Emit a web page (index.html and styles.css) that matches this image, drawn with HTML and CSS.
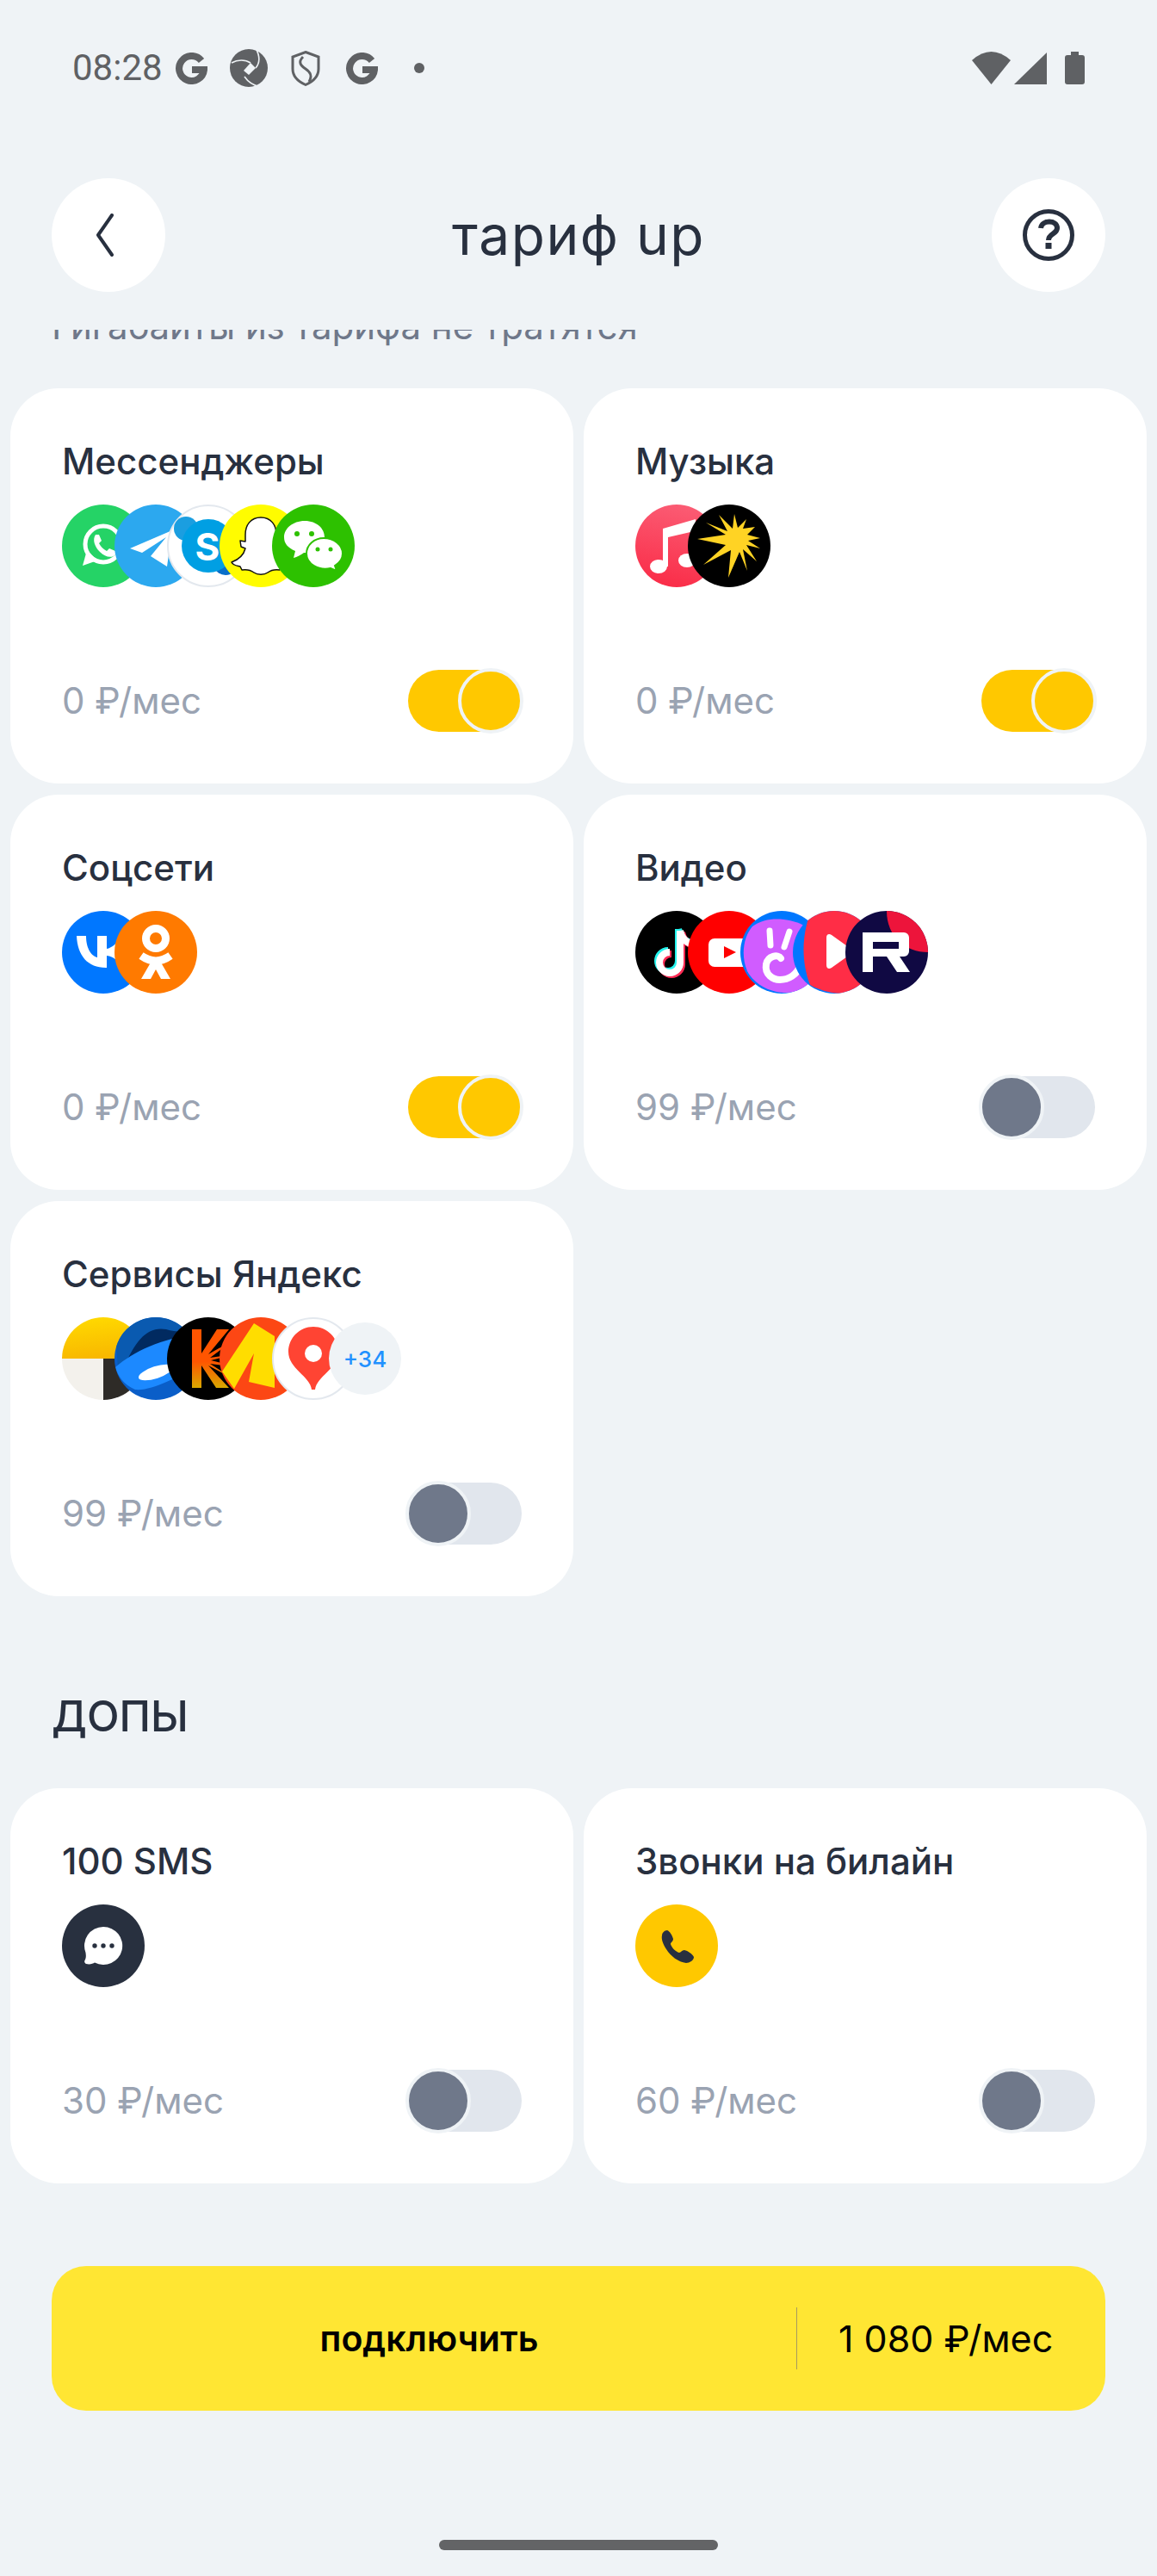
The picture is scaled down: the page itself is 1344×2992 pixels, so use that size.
FILE: index.html
```html
<!DOCTYPE html>
<html lang="ru">
<head>
<meta charset="utf-8">
<title>тариф up</title>
<link rel="stylesheet" href="styles.css">
</head>
<body>
<div class="page">
  <div class="status">
    <span class="time">08:28</span>
    <svg class="st st-g first" viewBox="0 0 37 37"><path class="g-stroke" d="M30 9.5A14.5 14.5 0 1 0 33 20H19"/></svg>
    <svg class="st st-shutter" viewBox="0 0 44 46"><circle cx="22" cy="23" r="22" fill="#5f6164"/><g fill="none" stroke="#eff3f6" stroke-width="1.6"><path d="M2 17C9 13 18 13 24 17"/><path d="M30 0C35 9 35 17 30 23"/><path d="M17 33C21 39 27 43 35 45"/></g><path d="M24 17L30 23L22 31L16 26Z" fill="#eff3f6"/></svg>
    <svg class="st st-shield" viewBox="0 0 34 41"><path d="M17 1.5L32 7V21C32 30 25 36 17 39.5C9 36 2 30 2 21V7Z" fill="none" stroke="#5f6164" stroke-width="3"/><path d="M14 7C8 13 11 17 17 21C23 25 25 29 21 36" fill="none" stroke="#5f6164" stroke-width="3"/></svg>
    <svg class="st st-g second" viewBox="0 0 37 37"><path class="g-stroke" d="M30 9.5A14.5 14.5 0 1 0 33 20H19"/></svg>
    <span class="dot"></span>
    <svg class="st st-sys" viewBox="0 0 131 38"><path d="M0 10Q22.500 -10 45 10L22.500 38Z" fill="#5f6164"/><path d="M49 38H87V1Z" fill="#5f6164"/><path d="M115 0H124V4H128A3 3 0 0 1 131 7V35A3 3 0 0 1 128 38H111A3 3 0 0 1 108 35V7A3 3 0 0 1 111 4H115Z" fill="#5f6164"/></svg>
  </div>

  <header class="header">
    <button class="round" aria-label="назад"><svg class="chev" viewBox="0 0 24 50"><path d="M20 2L4 25L20 48" fill="none" stroke="#28303f" stroke-width="4" stroke-linecap="round" stroke-linejoin="round"/></svg></button>
    <h1 class="title">тариф up</h1>
    <button class="round" aria-label="помощь"><svg class="help" viewBox="0 0 60 60"><circle cx="30" cy="30" r="27.500" fill="none" stroke="#28303f" stroke-width="5"/><path d="M21 22C22 12 40 12 40 22C40 29 30 28 30 36" fill="none" stroke="#28303f" stroke-width="6"/><rect x="26.500" y="39" width="7" height="7" fill="#28303f"/></svg></button>
  </header>

  <main class="scroll">
    <p class="note">Гигабайты из тарифа не тратятся</p>

    <section class="grid">
      <article class="card">
        <h2 class="card-title">Мессенджеры</h2>
        <div class="icons">
          <svg class="ic" viewBox="0 0 96 96"><circle cx="48" cy="48" r="48" fill="#25d366"/><circle cx="48" cy="46" r="21" fill="none" stroke="#fff" stroke-width="5"/><path d="M24 71L29 53L41 65Z" fill="#fff"/><path d="M39 35L43 35L46 42L43 45C45 49 48 52 52 54L55 51L62 54V58C58 63 50 61 44 55C38 49 35 41 39 35Z" fill="#fff"/></svg>
          <svg class="ic" viewBox="0 0 96 96"><circle cx="48" cy="48" r="48" fill="#2ca8ef"/><path d="M18 51L67 30L61 72L42 60L60 38L32 56Z" fill="#fff"/></svg>
          <svg class="ic" viewBox="0 0 96 96"><circle cx="48" cy="48" r="47" fill="#fff" stroke="#e3e8ee" stroke-width="2"/><circle cx="22" cy="28" r="14" fill="#1b9ee0"/><circle cx="68" cy="68" r="14" fill="#0a6fc9"/><circle cx="48" cy="48" r="31" fill="#009fe3"/><text class="skype" x="47" y="65">S</text></svg>
          <svg class="ic" viewBox="0 0 96 96"><circle cx="48" cy="48" r="48" fill="#fffc00"/><path d="M48 15C60 15 66 24 66 35V43L72 42L70 49L66 51C68 59 74 64 82 67C80 71 76 71 72 72L70 76C64 75 60 76 56 79C52 82 44 82 40 79C36 76 32 75 26 76L24 72C20 71 16 71 14 67C22 64 28 59 30 51L25 49L24 42L30 43V35C30 24 36 15 48 15Z" fill="#fff" stroke="#111" stroke-width="1.500" stroke-linejoin="round"/></svg>
          <svg class="ic" viewBox="0 0 96 96"><circle cx="48" cy="48" r="48" fill="#2dc100"/><path d="M38 19C52 19 61 28 61 38C61 49 50 57 37 56C34 58 29 61 25 62L27 54C18 50 14 45 14 38C14 28 24 19 38 19Z" fill="#fff"/><circle cx="29" cy="34" r="3" fill="#2dc100"/><circle cx="46" cy="34" r="3" fill="#2dc100"/><path d="M60 39C72 39 82 47 82 57C82 63 78 68 73 71L75 77L68 74C54 77 40 69 40 57C40 47 49 39 60 39Z" fill="#fff" stroke="#2dc100" stroke-width="2"/><circle cx="53" cy="52" r="2.500" fill="#2dc100"/><circle cx="68" cy="52" r="2.500" fill="#2dc100"/></svg>
        </div>
        <div class="foot"><span class="price">0 ₽/мес</span><span class="toggle on"><span class="knob"></span></span></div>
      </article>

      <article class="card">
        <h2 class="card-title">Музыка</h2>
        <div class="icons">
          <svg class="ic" viewBox="0 0 96 96"><defs><linearGradient id="am" x1="0.600" y1="0" x2="0.400" y2="1"><stop offset="0" stop-color="#fb5c74"/><stop offset="1" stop-color="#fa2d48"/></linearGradient></defs><circle cx="48" cy="48" r="48" fill="url(#am)"/><path d="M32 28L70 17V60H64V32L38 38V72H32Z" fill="#fff"/><ellipse cx="27" cy="72" rx="10" ry="8" fill="#fff"/><ellipse cx="60" cy="65" rx="10" ry="8" fill="#fff"/></svg>
          <svg class="ic" viewBox="0 0 96 96"><circle cx="48" cy="48" r="48" fill="#000"/><polygon fill="#ffd324" points="11,40 44,35 21,21 46,31 36,12 52,28 54,11 58,27 68,17 64,28 78,26 69,35 84,39 70,42 84,51 68,47 80,66 64,52 69,77 60,55 47,85 50,53 18,70 44,47"/></svg>
        </div>
        <div class="foot"><span class="price">0 ₽/мес</span><span class="toggle on"><span class="knob"></span></span></div>
      </article>

      <article class="card">
        <h2 class="card-title">Соцсети</h2>
        <div class="icons">
          <svg class="ic" viewBox="0 0 96 96"><circle cx="48" cy="48" r="48" fill="#07f"/><path d="M51 66C30 66 18 52 17 29H28C28 46 36 53 41 54V29H52V44C58 43 65 37 68 29H78C76 40 68 47 62 50C68 53 77 59 80 66H69C66 58 60 53 52 52V66Z" fill="#fff"/></svg>
          <svg class="ic" viewBox="0 0 96 96"><circle cx="48" cy="48" r="48" fill="#ff7a00"/><circle cx="48" cy="32" r="11.500" fill="none" stroke="#fff" stroke-width="9"/><path d="M31 52Q48 64 65 52" fill="none" stroke="#fff" stroke-width="9"/><path d="M42 60L31 79H42L48 68L54 79H65L54 60Z" fill="#fff"/></svg>
        </div>
        <div class="foot"><span class="price">0 ₽/мес</span><span class="toggle on"><span class="knob"></span></span></div>
      </article>

      <article class="card">
        <h2 class="card-title">Видео</h2>
        <div class="icons">
          <svg class="ic" viewBox="0 0 96 96"><circle cx="48" cy="48" r="48" fill="#000"/><g fill="none" stroke-width="8"><path stroke="#25f4ee" d="M50 21V58A12 12 0 1 1 38 46"/><path stroke="#25f4ee" d="M50 21C52 31 58 36 67 37"/><path stroke="#fe2c55" d="M54 25V62A12 12 0 1 1 42 50"/><path stroke="#fe2c55" d="M54 25C56 35 62 40 71 41"/><path stroke="#fff" d="M52 23V60A12 12 0 1 1 40 48"/><path stroke="#fff" d="M52 23C54 33 60 38 69 39"/></g></svg>
          <svg class="ic" viewBox="0 0 96 96"><circle cx="48" cy="48" r="48" fill="#f00"/><rect x="24" y="32" width="50" height="33" rx="7" fill="#fff"/><path d="M42 41L56 48L42 55Z" fill="#f00"/></svg>
          <svg class="ic" viewBox="0 0 96 96"><defs><clipPath id="ivi"><circle cx="48" cy="48" r="48"/></clipPath></defs><circle cx="48" cy="48" r="48" fill="#07f"/><path clip-path="url(#ivi)" d="M14 18C30 6 55 8 72 16C96 40 92 80 70 92C50 100 20 92 8 70C0 50 4 30 14 18Z" fill="#d05cff"/><path d="M34 23L35 40M57 24L51 42" stroke="#fff" stroke-width="7" stroke-linecap="round"/><path d="M47 55C44 50 32 52 30 62C28 74 38 80 46 80C56 80 66 74 69 64" fill="none" stroke="#fff" stroke-width="8" stroke-linecap="round"/></svg>
          <svg class="ic" viewBox="0 0 96 96"><defs><clipPath id="red"><circle cx="48" cy="48" r="48"/></clipPath></defs><circle cx="48" cy="48" r="48" fill="#07f"/><path clip-path="url(#red)" d="M20 3C45 -6 75 -2 100 10V90C75 98 45 100 20 86C10 60 10 30 20 3Z" fill="#ff2d46"/><path d="M39 31C39 27 42 26 45 28L66 43C69 45 69 49 66 51L45 66C42 68 39 67 39 63Z" fill="#fff"/></svg>
          <svg class="ic" viewBox="0 0 96 96"><circle cx="48" cy="48" r="48" fill="#100943"/><path d="M48 0A48 48 0 0 1 96 48C70 48 48 30 48 0Z" fill="#ed143b"/><path fill-rule="evenodd" d="M20 25H68A6 6 0 0 1 74 31V47A6 6 0 0 1 68 53H63L75 71H60L48 53H32V71H20ZM32 36V44H62V36Z" fill="#fff"/></svg>
        </div>
        <div class="foot"><span class="price">99 ₽/мес</span><span class="toggle"><span class="knob"></span></span></div>
      </article>

      <article class="card">
        <h2 class="card-title">Сервисы Яндекс</h2>
        <div class="icons">
          <svg class="ic" viewBox="0 0 96 96"><defs><linearGradient id="yp" x1="0.500" y1="0" x2="0.700" y2="1"><stop offset="0" stop-color="#ffd800"/><stop offset="1" stop-color="#f8b500"/></linearGradient></defs><path d="M0 48A48 48 0 0 1 96 48Z" fill="url(#yp)"/><path d="M0 48H48V96A48 48 0 0 1 0 48Z" fill="#f3f1ec"/><path d="M48 48H96A48 48 0 0 1 48 96Z" fill="#2e2b27"/></svg>
          <svg class="ic" viewBox="0 0 96 96"><defs><clipPath id="blue"><circle cx="48" cy="48" r="48"/></clipPath></defs><circle cx="48" cy="48" r="48" fill="#0a5ec8"/><g clip-path="url(#blue)"><path d="M0 0H96V16L4 60Z" fill="#0a5ab0"/><path d="M12 56C24 28 38 10 60 14C72 18 84 16 96 18V30Z" fill="#012a60"/><path d="M1 58C22 40 55 24 96 20V62C70 68 45 86 24 84C10 78 4 68 1 58Z" fill="#1c89ff"/><ellipse cx="48" cy="64" rx="21" ry="7" transform="rotate(-18 48 64)" fill="#fff"/></g></svg>
          <svg class="ic" viewBox="0 0 96 96"><defs><linearGradient id="kp" x1="0" y1="0" x2="0" y2="1"><stop offset="0.550" stop-color="#ff5500"/><stop offset="1" stop-color="#d8a800"/></linearGradient></defs><circle cx="48" cy="48" r="48" fill="#000"/><path fill="url(#kp)" d="M29 14H40V42L58 14H72L48 43L78 26L50 47L84 42L51 50L84 58L50 54L78 72L48 56L72 82H57L40 56V82H29Z"/></svg>
          <svg class="ic" viewBox="0 0 96 96"><circle cx="48" cy="48" r="48" fill="#fc4714"/><path d="M3 63L40 7L64 22L64 82L34 75L40 42L17 83Z" fill="#ffdd00"/></svg>
          <svg class="ic" viewBox="0 0 96 96"><circle cx="48" cy="48" r="47" fill="#fff" stroke="#e3e8ee" stroke-width="2"/><path d="M48 11C32 11 19 24 19 40C19 60 44 68 46 84H50C52 68 77 60 77 40C77 24 64 11 48 11Z" fill="#ff4433"/><circle cx="48" cy="42" r="10" fill="#fff"/></svg>
          <span class="more">+34</span>
        </div>
        <div class="foot"><span class="price">99 ₽/мес</span><span class="toggle"><span class="knob"></span></span></div>
      </article>
    </section>

    <h3 class="section">ДОПЫ</h3>

    <section class="grid">
      <article class="card">
        <h2 class="card-title">100 SMS</h2>
        <div class="icons">
          <svg class="ic" viewBox="0 0 96 96"><circle cx="48" cy="48" r="48" fill="#28303f"/><path d="M48 26A22 22 0 1 1 38 67.500C36 69 32 70 28 69C26 68 25.500 66 27 64C28 62 28 60 27.500 56A22 22 0 0 1 48 26Z" fill="#fff"/><circle cx="38" cy="48" r="2.700" fill="#28303f"/><circle cx="48" cy="48" r="2.700" fill="#28303f"/><circle cx="58" cy="48" r="2.700" fill="#28303f"/></svg>
        </div>
        <div class="foot"><span class="price">30 ₽/мес</span><span class="toggle"><span class="knob"></span></span></div>
      </article>
      <article class="card">
        <h2 class="card-title">Звонки на билайн</h2>
        <div class="icons">
          <svg class="ic" viewBox="0 0 96 96"><circle cx="48" cy="48" r="48" fill="#ffc800"/><path d="M37 30C40 31 43 36 44 40C44 43 41 44 41 46C42 50 47 55 51 56C53 56 54 53 57 53C61 54 66 57 68 61C68 65 63 68 59 68C50 67 41 60 36 52C32 46 30 40 31 36C31 33 34 30 37 30Z" fill="#28303f"/></svg>
        </div>
        <div class="foot"><span class="price">60 ₽/мес</span><span class="toggle"><span class="knob"></span></span></div>
      </article>
    </section>

    <button class="cta"><span class="cta-label">подключить</span><span class="cta-price">1 080 ₽/мес</span></button>
    <div class="home"></div>
  </main>
</div>
</body>
</html>
```

FILE: styles.css
```css
* { box-sizing: border-box; }
html, body { margin: 0; padding: 0; }
body { background: #eff3f6; font-family: "Inter", "Noto Sans", sans-serif; color: #28303f; }
.page { width: 1344px; height: 2992px; overflow: hidden; background: #eff3f6; }

.status { height: 158px; padding: 0 84px; display: flex; align-items: center; }
.time { font-family: "Roboto", sans-serif; font-size: 42px; color: #5f6164; line-height: 1; width: 104px; }
.st { display: block; flex: none; }
.st-g { width: 37px; height: 37px; }
.st-g.first { margin-left: 16px; }
.st-g.second { margin-left: 30px; }
.g-stroke { fill: none; stroke: #5f6164; stroke-width: 8; }
.st-shutter { width: 44px; height: 46px; margin-left: 26px; }
.st-shield { width: 34px; height: 41px; margin-left: 27px; }
.dot { width: 12px; height: 12px; border-radius: 50%; background: #5f6164; margin-left: 42px; }
.st-sys { width: 131px; height: 38px; margin-left: auto; }

.header { margin-top: 49px; padding: 0 60px; height: 132px; display: flex; align-items: center; justify-content: space-between; }
.round { width: 132px; height: 132px; border: 0; padding: 0; border-radius: 50%; background: #fff; display: flex; align-items: center; justify-content: center; }
.chev { width: 24px; height: 50px; margin-right: 8px; }
.help { width: 60px; height: 60px; }
.title { margin: 0; font-size: 64px; font-weight: 400; letter-spacing: 1.5px; line-height: 72px; color: #28303f; }

.scroll { margin-top: 44px; height: 2609px; overflow: hidden; }
.note { margin: -28px 0 0; height: 96px; padding: 0 60px; font-size: 42px; line-height: 48px; color: #6f788a; }

.grid { padding: 0 12px; display: grid; grid-template-columns: 654px 654px; column-gap: 12px; row-gap: 13px; }
.card { height: 459px; background: #fff; border-radius: 56px; padding: 60px; display: flex; flex-direction: column; }
.card-title { margin: 0; font-size: 42px; font-weight: 500; line-height: 50px; color: #28303f; }
.icons { display: flex; align-items: center; margin-top: 25px; height: 96px; }
.ic { width: 96px; height: 96px; flex: none; display: block; }
.ic + .ic { margin-left: -35px; }
.skype { font-family: "Inter", sans-serif; font-size: 44px; font-weight: 700; fill: #fff; text-anchor: middle; }
.more { width: 84px; height: 84px; flex: none; margin-left: -30px; border-radius: 50%; background: #eff3f6; color: #2291ff; font-size: 26px; font-weight: 500; display: flex; align-items: center; justify-content: center; position: relative; }

.foot { margin-top: auto; display: flex; align-items: center; justify-content: space-between; height: 72px; }
.price { font-size: 42px; color: #9aa3b2; line-height: 50px; }
.toggle { position: relative; display: block; width: 132px; height: 72px; border-radius: 36px; background: #e1e6ed; }
.toggle.on { background: #ffc800; }
.knob { position: absolute; top: -2px; left: -3px; width: 76px; height: 76px; border-radius: 50%; border: 4px solid #eff3f6; background: #6f788a; }
.toggle.on .knob { left: auto; right: -2px; background: #ffc800; }

.section { margin: 110px 0 53px; padding: 0 60px; font-size: 49px; font-weight: 500; line-height: 60px; color: #28303f; }

.cta { display: flex; align-items: stretch; margin: 96px 60px 0; width: 1224px; height: 168px; border: 0; padding: 48px 0; border-radius: 40px; background: #ffe633; color: #000; font-family: inherit; }
.cta-label { width: 866px; padding-left: 12px; display: flex; align-items: center; justify-content: center; font-size: 41px; font-weight: 600; border-right: 1px solid #a89a5f; }
.cta-price { padding-left: 48px; display: flex; align-items: center; font-size: 43px; font-weight: 400; }
.home { width: 324px; height: 12px; margin: 150px auto 0; border-radius: 6px; background: #636466; }
```
